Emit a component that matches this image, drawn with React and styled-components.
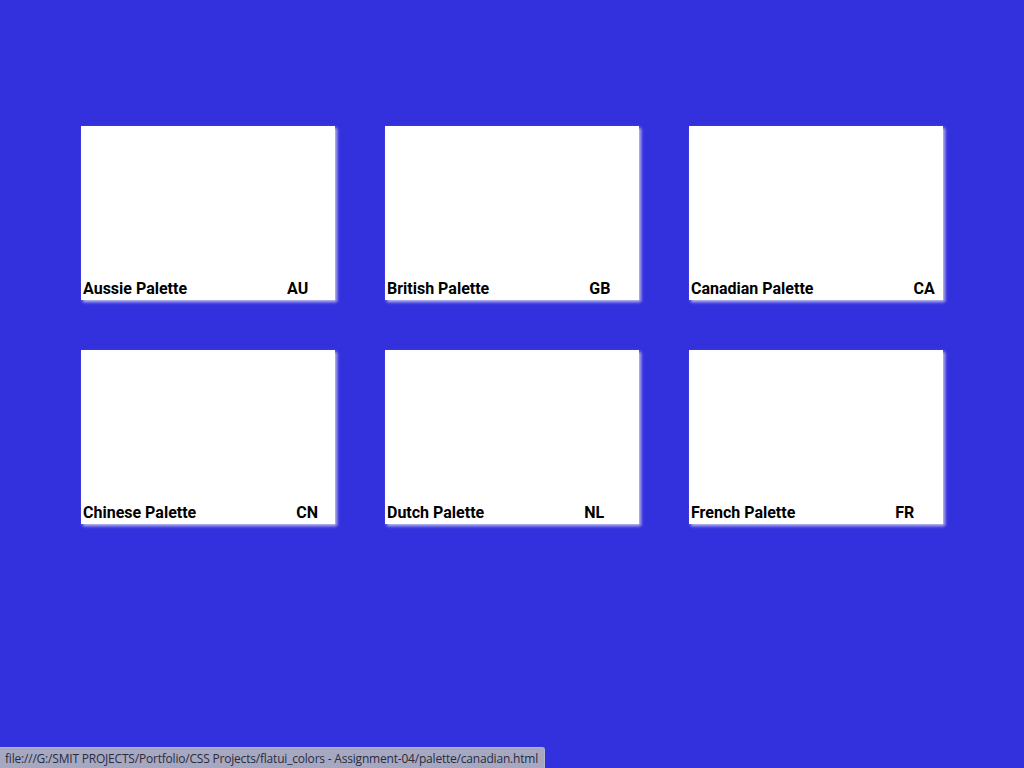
import React from 'react';
import styled, { createGlobalStyle } from 'styled-components';

const Global = createGlobalStyle`
  html, body {
    margin: 0;
    padding: 0;
    background: #3330dd;
    font-family: Roboto, "Liberation Sans", sans-serif;
  }
`;

const Page = styled.div`
  width: 1024px;
  height: 768px;
  box-sizing: border-box;
  padding-top: 126px;
  display: flex;
  justify-content: center;
  align-items: flex-start;
`;

const Grid = styled.div`
  display: grid;
  grid-template-columns: repeat(3, 254px);
  grid-auto-rows: 174px;
  column-gap: 50px;
  row-gap: 50px;
`;

const Card = styled.a`
  display: flex;
  flex-direction: column;
  justify-content: flex-end;
  background: #fff;
  box-shadow: 2px 2px 3px rgba(200, 200, 240, 0.95);
  padding: 0 0 2px 2px;
  text-decoration: none;
  color: #000;
`;

const Label = styled.div`
  display: flex;
  align-items: baseline;
  font-size: 16px;
  font-weight: 700;
  line-height: 19px;
`;

const Code = styled.span`
  margin-left: 100px;
`;

const Status = styled.div`
  position: fixed;
  left: 0;
  bottom: 0;
  height: 20px;
  padding: 0 6px 0 5px;
  display: flex;
  align-items: center;
  background: #a6a8c2;
  border: 1px solid #b4b6cc;
  border-bottom: none;
  border-left: none;
  border-top-right-radius: 3px;
  font-family: "Open Sans", "DejaVu Sans", sans-serif;
  font-size: 12px;
  letter-spacing: -0.2px;
  color: #2b2b3a;
  white-space: nowrap;
`;

const palettes = [
  { name: 'Aussie Palette', code: 'AU' },
  { name: 'British Palette', code: 'GB' },
  { name: 'Canadian Palette', code: 'CA' },
  { name: 'Chinese Palette', code: 'CN' },
  { name: 'Dutch Palette', code: 'NL' },
  { name: 'French Palette', code: 'FR' },
];

export default function App() {
  return (
    <>
      <Global />
      <Page>
        <Grid>
          {palettes.map(p => (
            <Card key={p.code} href="#">
              <Label>
                <span>{p.name}</span>
                <Code>{p.code}</Code>
              </Label>
            </Card>
          ))}
        </Grid>
      </Page>
      <Status>file:///G:/SMIT PROJECTS/Portfolio/CSS Projects/flatui_colors - Assignment-04/palette/canadian.html</Status>
    </>
  );
}
